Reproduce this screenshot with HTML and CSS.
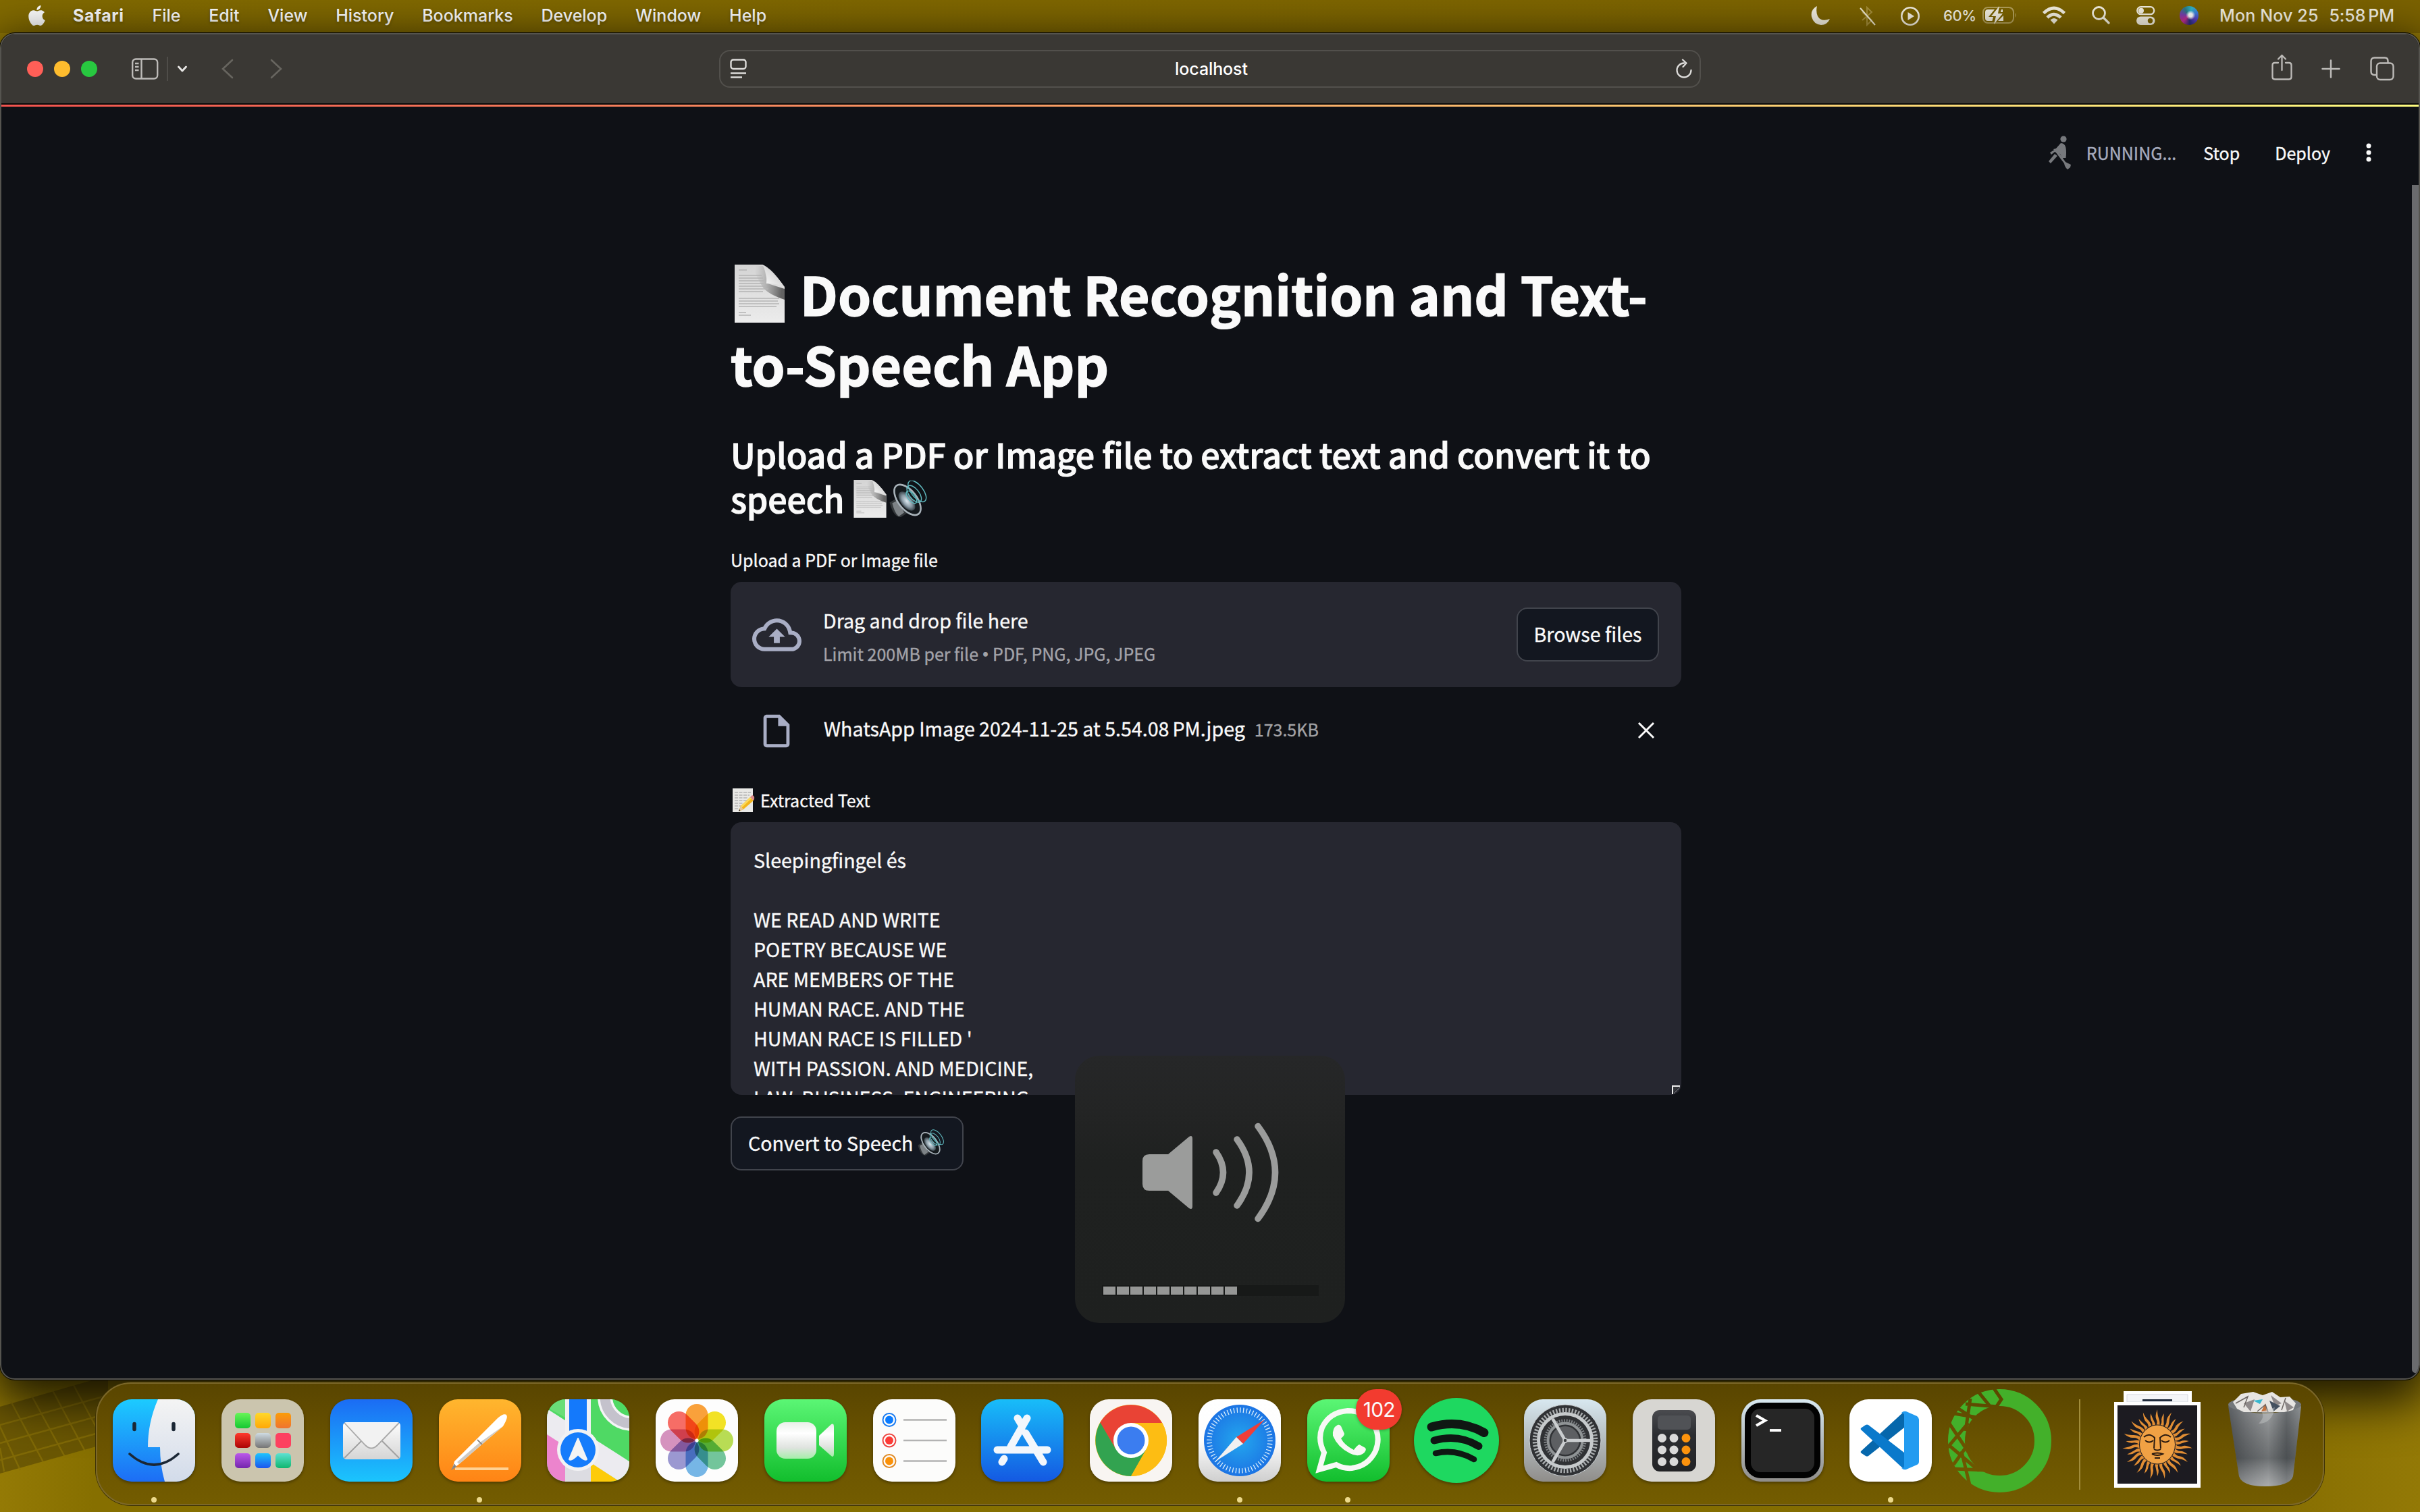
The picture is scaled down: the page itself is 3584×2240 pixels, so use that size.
FILE: index.html
```html
<!DOCTYPE html>
<html lang="en">
<head>
<meta charset="utf-8">
<title>localhost</title>
<link rel="stylesheet" href="styles.css">
</head>
<body>
<svg class="defs" width="0" height="0">
  <defs>
    <linearGradient id="paper" x1="0" y1="0" x2="0" y2="1"><stop offset="0" stop-color="#d4d4d4"/><stop offset="1" stop-color="#ececec"/></linearGradient>
    <linearGradient id="curlshade" x1="0" y1="0" x2="1" y2=".15"><stop offset=".1" stop-color="#888" stop-opacity="0"/><stop offset="1" stop-color="#555" stop-opacity=".9"/></linearGradient>
    <linearGradient id="curl" x1="0" y1="1" x2="1" y2="0"><stop offset="0" stop-color="#fff"/><stop offset="1" stop-color="#bbb"/></linearGradient>
    <radialGradient id="cone"><stop offset="0" stop-color="#dbe8f0"/><stop offset=".6" stop-color="#8b9ba6"/><stop offset="1" stop-color="#39434a"/></radialGradient>
    <symbol id="e-doc" viewBox="0 0 74 86">
      <path d="M0 0H41Q56 8 74 33V86H0Z" fill="url(#paper)"/>
      <path d="M26 2H43L49 28L74 36V52Q50 44 42 34Q34 22 26 2Z" fill="url(#curlshade)"/>
      <path d="M41 0Q56 6 74 34Q64 27 47 28Q49 12 41 0Z" fill="url(#curl)"/>
      <path d="M6 8H18M6 16H40M6 20H42M6 24H44M6 28H43M6 32H45M6 36H50M6 40H42M6 50H66M6 54H64M6 58H66M6 62H62M6 71H17M6 75H24" stroke="#b4b4b4" stroke-width="1.3"/>
    </symbol>
    <symbol id="e-spk" viewBox="0 0 58 56">
      <path d="M2 33L14 26L30 48L19 55Q8 56 2 33Z" fill="#33373a"/>
      <path d="M6 34L14 30L24 48L16 54Q10 50 6 34Z" fill="#7d8286"/>
      <ellipse cx="29" cy="29" rx="14" ry="27" transform="rotate(-38 29 29)" fill="#14191d" stroke="#a9b3ba" stroke-width="2.600"/>
      <ellipse cx="28" cy="31" rx="9" ry="17" transform="rotate(-38 28 31)" fill="url(#cone)"/>
      <g fill="none" stroke="#5fb7bd" stroke-width="1.500"><ellipse cx="35" cy="25" rx="5.500" ry="11" transform="rotate(-38 35 25)"/><ellipse cx="39" cy="20" rx="7.500" ry="15" transform="rotate(-38 39 20)"/><ellipse cx="43.500" cy="16" rx="9" ry="19" transform="rotate(-38 43.500 16)"/></g>
    </symbol>
    <symbol id="e-memo" viewBox="0 0 34 36">
      <path d="M1 0H31V35H1Z" fill="#e9e9e6"/>
      <path d="M4 6H28M4 10H26M4 14H24M4 18H22M4 22H16M4 26H14M4 30H11" stroke="#9b9b9b" stroke-width="1.2" stroke-dasharray="5 1.5"/>
      <path d="M10 34L13 26L27 13L32 18L17 31Z" fill="#f3b51c"/><path d="M13 26L27 13L29 15L14 29Z" fill="#fbd95b"/>
      <path d="M27 13L30 10Q34 11 33 16L32 18Z" fill="#d98a8a"/><path d="M10 34L13 26L17 31Z" fill="#e6c79a"/><path d="M10 34L11 31L12.500 32.500Z" fill="#222"/>
    </symbol>
    <linearGradient id="g-find" x1="0" y1="0" x2="0" y2="1"><stop offset="0" stop-color="#1ccbff"/><stop offset="1" stop-color="#1d6df5"/></linearGradient>
    <linearGradient id="g-find2" x1="0" y1="0" x2="0" y2="1"><stop offset="0" stop-color="#f4f4f4"/><stop offset="1" stop-color="#d2dbea"/></linearGradient>
    <linearGradient id="g-mail" x1="0" y1="0" x2="0" y2="1"><stop offset="0" stop-color="#1b6cf4"/><stop offset="1" stop-color="#1bc5fd"/></linearGradient>
    <linearGradient id="g-env" x1="0" y1="0" x2="0" y2="1"><stop offset="0" stop-color="#fdfdfd"/><stop offset="1" stop-color="#d5d5d5"/></linearGradient>
    <linearGradient id="g-pages" x1="0" y1="0" x2="0" y2="1"><stop offset="0" stop-color="#ffb62e"/><stop offset="1" stop-color="#ff8415"/></linearGradient>
    <linearGradient id="g-green" x1="0" y1="0" x2="0" y2="1"><stop offset="0" stop-color="#5bf675"/><stop offset="1" stop-color="#12be2d"/></linearGradient>
    <linearGradient id="g-cam" x1="0" y1="0" x2="0" y2="1"><stop offset="0" stop-color="#e8f0e8"/><stop offset=".3" stop-color="#fff"/><stop offset=".7" stop-color="#dfe3df"/><stop offset="1" stop-color="#a5eeaa"/></linearGradient>
    <linearGradient id="g-app" x1="0" y1="0" x2="0" y2="1"><stop offset="0" stop-color="#18bdf9"/><stop offset="1" stop-color="#1459e2"/></linearGradient>
    <linearGradient id="g-saf" x1="0" y1="0" x2="0" y2="1"><stop offset="0" stop-color="#fff"/><stop offset=".5" stop-color="#fdfdfd"/><stop offset="1" stop-color="#cfcfcf"/></linearGradient>
    <radialGradient id="g-saf2"><stop offset="0" stop-color="#23a7ee"/><stop offset="1" stop-color="#1c74e4"/></radialGradient>
    <linearGradient id="g-set" x1="0" y1="0" x2="0" y2="1"><stop offset="0" stop-color="#d8e8f0"/><stop offset="1" stop-color="#8f8d8a"/></linearGradient>
    <linearGradient id="g-calc" x1="0" y1="0" x2="0" y2="1"><stop offset="0" stop-color="#4a4b4f"/><stop offset=".4" stop-color="#2b2d31"/><stop offset="1" stop-color="#222326"/></linearGradient>
    <linearGradient id="t-green" x1="0" y1="0" x2="0" y2="1"><stop offset="0" stop-color="#68f558"/><stop offset="1" stop-color="#14c832"/></linearGradient>
    <linearGradient id="t-yellow" x1="0" y1="0" x2="0" y2="1"><stop offset="0" stop-color="#ffd82a"/><stop offset="1" stop-color="#ffa808"/></linearGradient>
    <linearGradient id="t-orange" x1="0" y1="0" x2="0" y2="1"><stop offset="0" stop-color="#fb9d08"/><stop offset="1" stop-color="#ef7430"/></linearGradient>
    <linearGradient id="t-red" x1="0" y1="0" x2="0" y2="1"><stop offset="0" stop-color="#ff3a2c"/><stop offset="1" stop-color="#ab0504"/></linearGradient>
    <linearGradient id="t-grey" x1="0" y1="0" x2="0" y2="1"><stop offset="0" stop-color="#cfdbe2"/><stop offset="1" stop-color="#757575"/></linearGradient>
    <linearGradient id="t-purple" x1="0" y1="0" x2="0" y2="1"><stop offset="0" stop-color="#bb58ea"/><stop offset="1" stop-color="#7426ac"/></linearGradient>
    <linearGradient id="t-blue" x1="0" y1="0" x2="0" y2="1"><stop offset="0" stop-color="#1cc4ff"/><stop offset="1" stop-color="#1b55ee"/></linearGradient>
    <linearGradient id="t-teal" x1="0" y1="0" x2="0" y2="1"><stop offset="0" stop-color="#5ce2d2"/><stop offset="1" stop-color="#10b66e"/></linearGradient>
    <linearGradient id="g-bin" x1="0" y1="0" x2="1" y2="0"><stop offset="0" stop-color="#5c6064"/><stop offset=".25" stop-color="#808386"/><stop offset=".55" stop-color="#a2a5a7"/><stop offset=".8" stop-color="#6c7073"/><stop offset="1" stop-color="#8e9295"/></linearGradient>
    <linearGradient id="g-binv" x1="0" y1="0" x2="0" y2="1"><stop offset="0" stop-color="#000" stop-opacity="0"/><stop offset=".65" stop-color="#1c2022" stop-opacity=".4"/><stop offset="1" stop-color="#bbb" stop-opacity=".3"/></linearGradient>
    <clipPath id="sq"><rect width="122" height="122" rx="28"/></clipPath>
    <mask id="weave"><rect width="153" height="153" fill="#fff"/><path d="M66-4L79 15L69 30M26 22L73 26M44 3L66 30M33 14L26 62M8 36L44 42M14 28L42 46M0 48L30 93M30 50L-2 88M0 82L46 121M28 84L8 112M8 118L54 120M20 92L33 146" stroke="#000" stroke-width="5" fill="none"/></mask>
    <g id="rays"><path d="M-3-26Q1-32-1.500-37Q-4-42 0-52Q0-44 2-39Q4.500-33 3-26Z"/><path transform="rotate(12)" d="M-3-26Q0-31-1-35Q-3-40 0-47Q1-40 2-36Q4-31 3-26Z"/></g>
  </defs>
</svg>

<svg class="wallpaper" width="400" height="196" viewBox="0 2044 400 196">
  <path d="M0 2084L160 2038V2138L0 2183Z" fill="#5f4d04" opacity=".75"/>
  <path d="M0 2111L160 2067M0 2138L160 2094M0 2163L160 2119M-10 2092L30 2178M16 2076L64 2166M47 2068L96 2158M78 2060L126 2150M109 2052L156 2140M0 2145L6 2180" stroke="#8a7208" stroke-width="2.500" opacity=".7"/>
</svg>

<header class="menubar">
  <svg class="apple" width="29" height="30" viewBox="2 0 20 24" fill="#fff"><path d="M12.152 6.896c-.948 0-2.415-1.078-3.960-1.040-2.040.027-3.910 1.183-4.961 3.014-2.117 3.675-.546 9.103 1.519 12.090 1.013 1.454 2.208 3.090 3.792 3.039 1.520-.065 2.090-.987 3.935-.987 1.831 0 2.350.987 3.960.948 1.637-.026 2.676-1.480 3.676-2.948 1.156-1.688 1.636-3.325 1.662-3.415-.039-.013-3.182-1.221-3.220-4.857-.026-3.040 2.480-4.494 2.597-4.559-1.429-2.090-3.623-2.324-4.390-2.376-2-.156-3.675 1.090-4.610 1.090zM15.530 3.830c.843-1.012 1.400-2.427 1.245-3.830-1.207.052-2.662.805-3.532 1.818-.780.896-1.454 2.338-1.273 3.714 1.338.104 2.715-.688 3.559-1.701"/></svg>
  <nav class="menus"><b>Safari</b><span>File</span><span>Edit</span><span>View</span><span>History</span><span>Bookmarks</span><span>Develop</span><span>Window</span><span>Help</span></nav>
  <div class="status">
    <svg class="moon" width="28" height="28" viewBox="0 0 28 28"><path d="M9 0Q-1 5 1 16Q4 27 15 28Q24 28 28 19Q15 24 10 15Q7 8 9 0Z" fill="#f4f0e2"/></svg>
    <svg class="bt" width="24" height="30" viewBox="0 0 24 30" fill="none"><path d="M4 9L18 21L11 28V2L18 9L4 21" stroke="#a68f3a" stroke-width="2"/><path d="M1 3L23 28" stroke="#f0ead2" stroke-width="2"/></svg>
    <svg class="play" width="30" height="30" viewBox="0 0 30 30"><circle cx="15" cy="15" r="12.700" fill="none" stroke="#f4f0e2" stroke-width="2.600"/><path d="M11.500 9V21L21 15Z" fill="#f4f0e2"/></svg>
    <span class="pct">60%</span>
    <svg class="batt" width="52" height="28" viewBox="0 0 52 28"><rect x="1" y="2" width="45" height="23" rx="7" fill="none" stroke="#b3a05a" stroke-width="2"/><path d="M48.500 10Q51 13.500 48.500 17Z" fill="#b3a05a"/><path d="M4 9Q4 5 8 5H18L9 16H16L14.500 22H8Q4 22 4 18ZM28 5H30V9H27ZM31 14V22H23Z" fill="#f4f0e2"/><path d="M25 0L13 15H20L17 27L30 11H23Z" fill="#f4f0e2"/></svg>
    <svg class="wifi" width="36" height="27" viewBox="0 0 36 27" fill="none" stroke="#f4f0e2" stroke-width="4.600"><path d="M2.500 10.500Q18-4.500 33.500 10.500M8 17Q18 7.500 28 17"/><path d="M12.500 20.500Q18 15.500 23.500 20.500L18 26.500Z" fill="#f4f0e2" stroke="none"/></svg>
    <svg class="find" width="27" height="27" viewBox="0 0 27 27" fill="none" stroke="#f4f0e2" stroke-width="2.800"><circle cx="10.500" cy="10.500" r="9"/><path d="M17 17L25 25" stroke-width="3.200" stroke-linecap="round"/></svg>
    <svg class="cc" width="28" height="28" viewBox="0 0 28 28"><rect x="1.200" y="1.200" width="25" height="11" rx="5.500" fill="none" stroke="#f4f0e2" stroke-width="2.300"/><circle cx="7" cy="6.700" r="4" fill="#f4f0e2"/><rect x="0" y="15.500" width="27.500" height="12.500" rx="6.200" fill="#f4f0e2"/><circle cx="20.500" cy="21.700" r="3.700" fill="#7c6300"/></svg>
    <i class="siri"></i>
    <span class="clock">Mon Nov 25</span><span class="clock time">5:58<small></small>PM</span>
  </div>
</header>

<main class="window">
  <div class="toolbar">
    <i class="light red"></i><i class="light amber"></i><i class="light green"></i>
    <svg class="side" width="40" height="32" viewBox="0 0 40 32" fill="none" stroke="#bdbbb8" stroke-width="2.400"><rect x="1.200" y="1.500" width="37" height="29" rx="5"/><path d="M14.500 2V30M5 8H10.500M5 13H10.500M5 18H10.500"/></svg>
    <i class="rule"></i>
    <svg class="drop" width="14" height="10" viewBox="0 0 14 10" fill="none" stroke="#e8e7e5" stroke-width="2.800" stroke-linecap="round" stroke-linejoin="round"><path d="M1.500 2L7 8L12.500 2"/></svg>
    <svg class="prev" width="18" height="30" viewBox="0 0 18 30" fill="none" stroke="#67655f" stroke-width="2.600" stroke-linecap="round"><path d="M16 2L2 15L16 28"/></svg>
    <svg class="next" width="18" height="30" viewBox="0 0 18 30" fill="none" stroke="#67655f" stroke-width="2.600" stroke-linecap="round"><path d="M2 2L16 15L2 28"/></svg>
    <div class="urlbar">
      <svg width="26" height="30" viewBox="0 0 26 30" fill="none" stroke="#dddcda" stroke-width="2.400"><rect x="1.500" y="1.500" width="22" height="13.500" rx="3.500"/><path d="M1 21.500H24M1 27.500H18"/></svg>
      <span>localhost</span>
      <svg width="26" height="30" viewBox="0 0 26 30" fill="none" stroke="#dddcda" stroke-width="2.300" stroke-linecap="round" stroke-linejoin="round"><path d="M13 6.500A10.500 10.500 0 1 0 23.500 17M11 1.500L16.500 6.500L11.500 12"/></svg>
    </div>
    <svg class="share" width="32" height="40" viewBox="0 0 32 40" fill="none" stroke="#bdbbb8" stroke-width="2.300" stroke-linecap="round" stroke-linejoin="round"><path d="M10 13H5Q1.500 13 1.500 16.500V34Q1.500 37.500 5 37.500H26Q29.500 37.500 29.500 34V16.500Q29.500 13 26 13H21M15.500 24V2M10 7.500L15.500 2L21 7.500"/></svg>
    <svg class="plus" width="28" height="28" viewBox="0 0 28 28" stroke="#bdbbb8" stroke-width="2.500" stroke-linecap="round"><path d="M14 1.500V26.500M1.500 14H26.500"/></svg>
    <svg class="tabs" width="36" height="36" viewBox="0 0 36 36" fill="none" stroke="#bdbbb8" stroke-width="2.400"><rect x="10" y="9.500" width="24.500" height="24.500" rx="5"/><path d="M10 27H6.500Q1.500 27 1.500 22V6.500Q1.500 1.500 6.500 1.500H22Q26.500 1.500 26.500 6.500V9.500"/></svg>
  </div>
  <div class="page">
    <div class="appbar">
      <svg width="36" height="50" viewBox="0 0 36 50" fill="#77797d"><circle cx="23" cy="5" r="4.600"/><path d="M19 11Q25 11 26.500 18Q27.500 25 26.500 33L21 33L18 27L10 24L5 28L3 25L11 20Z"/><path d="M8 20L12 19L26 39L34 43L33 47L29 50Q25 47 24 41Z"/><path d="M1 38L10 27L14 30L4 41Z"/></svg>
      <span class="run">RUNNING...</span><span class="stop">Stop</span><span class="deploy">Deploy</span>
      <svg class="dots" width="8" height="28" viewBox="0 0 8 28" fill="#fafafa"><circle cx="4" cy="4" r="3.500"/><circle cx="4" cy="14" r="3.500"/><circle cx="4" cy="24" r="3.500"/></svg>
    </div>
    <div class="column">
      <h1><svg><use href="#e-doc"/></svg> Document Recognition and Text-<br>to-Speech App</h1>
      <h2>Upload a PDF or Image file to extract text and convert it to<br>speech <svg class="d"><use href="#e-doc"/></svg><svg class="s"><use href="#e-spk"/></svg></h2>
      <label>Upload a PDF or Image file</label>
      <section class="dropzone">
        <svg width="73" height="73" viewBox="0 0 24 24" fill="#a9aec5"><path d="M19.350 10.040C18.670 6.590 15.640 4 12 4 9.110 4 6.600 5.640 5.350 8.040 2.340 8.360 0 10.910 0 14c0 3.310 2.690 6 6 6h13c2.760 0 5-2.240 5-5 0-2.640-2.050-4.780-4.650-4.960zM19 18H6c-2.210 0-4-1.790-4-4 0-2.050 1.530-3.760 3.560-3.970l1.070-.110.500-.950C8.080 7.140 9.940 6 12 6c2.620 0 4.880 1.860 5.390 4.430l.300 1.500 1.530.110c1.560.100 2.780 1.410 2.780 2.960 0 1.650-1.350 3-3 3zM8 13h2.550v3h2.900v-3H16l-4-4z"/></svg>
        <div class="hint"><p>Drag and drop file here</p><small>Limit 200MB per file<em>•</em>PDF, PNG, JPG, JPEG</small></div>
        <button class="browse">Browse files</button>
      </section>
      <section class="file">
        <svg width="58" height="58" viewBox="0 0 24 24" fill="#a9aec5"><path d="M14 2H6c-1.100 0-1.990.900-1.990 2L4 20c0 1.100.890 2 1.990 2H18c1.100 0 2-.900 2-2V8l-6-6zM6 20V4h7v5h5v11H6z"/></svg>
        <p>WhatsApp Image 2024-11-25 at 5.54.08<i></i>PM.jpeg</p><small>173.5KB</small>
        <svg class="x" width="26" height="26" viewBox="0 0 26 26" stroke="#fafafa" stroke-width="3"><path d="M2 2L24 24M24 2L2 24"/></svg>
      </section>
      <label class="ext"><svg><use href="#e-memo"/></svg>Extracted Text</label>
      <div class="area">Sleepingfingel és

WE READ AND WRITE
POETRY BECAUSE WE
ARE MEMBERS OF THE
HUMAN RACE. AND THE
HUMAN RACE IS FILLED '
WITH PASSION. AND MEDICINE,
LAW, BUSINESS, ENGINEERING,<svg class="grip" width="13" height="13" viewBox="0 0 13 13" fill="none"><path d="M0 0H13L0 13Z" fill="#333539"/><path d="M1 13V1H12" stroke="#eee" stroke-width="2"/><path d="M3 12L12 3M7 12L12 7" stroke="#8d8d90"/></svg></div>
      <button class="convert">Convert to Speech<svg><use href="#e-spk"/></svg></button>
    </div>
    <i class="scroll"></i>
  </div>
</main>

<aside class="osd">
  <svg width="202" height="150" viewBox="0 0 202 150"><path d="M10 48H38L69 22Q74 19 74 25V125Q74 131 69 128L38 102H10Q0 102 0 92V58Q0 48 10 48Z" fill="#9b9c9b"/><g fill="none" stroke="#9b9c9b" stroke-width="9.500" stroke-linecap="round"><path d="M109 45Q130 75 109 105M140 26Q176 75 140 124M171 6.500Q222 75 171 143.500"/></g></svg>
  <div class="meter"><i></i><i></i><i></i><i></i><i></i><i></i><i></i><i></i><i></i><i></i></div>
</aside>

<footer class="dock">
  <div class="app on"><svg viewBox="0 0 122 122"><g clip-path="url(#sq)"><path d="M0 0H122V122H0Z" fill="url(#g-find)"/><path d="M67 0Q52 34 52 71H70Q70 98 77 122H122V0Z" fill="url(#g-find2)"/></g><g fill="none" stroke="#1b2735" stroke-linecap="round"><path d="M32 36.500V44.500M90 36.500V44.500" stroke-width="5.500"/><path d="M25 81Q61 113 97 81" stroke-width="3.600"/></g></svg></div>
  <div class="app"><svg viewBox="0 0 122 122"><rect width="122" height="122" rx="28" fill="#cbc5ae"/><rect x="20" y="20" width="23" height="23" rx="5" fill="url(#t-green)"/><rect x="50" y="20" width="23" height="23" rx="5" fill="url(#t-yellow)"/><rect x="80" y="20" width="23" height="23" rx="5" fill="url(#t-orange)"/><rect x="20" y="50" width="23" height="22" rx="5" fill="url(#t-red)"/><rect x="50" y="50" width="23" height="22" rx="5" fill="url(#t-grey)"/><rect x="80" y="50" width="23" height="22" rx="5" fill="#fd4160"/><rect x="20" y="80" width="23" height="22" rx="5" fill="url(#t-purple)"/><rect x="50" y="80" width="23" height="22" rx="5" fill="url(#t-blue)"/><rect x="80" y="80" width="23" height="22" rx="5" fill="url(#t-teal)"/></svg></div>
  <div class="app"><svg viewBox="0 0 122 122"><rect width="122" height="122" rx="28" fill="url(#g-mail)"/><rect x="19" y="34" width="85" height="55" rx="5" fill="url(#g-env)"/><path d="M21 87L46 62M102 87L77 62" stroke="#a0a0a0" stroke-width="1.800"/><path d="M21 35L52 68Q61 77 70 68L102 35" fill="#f2f2f2" stroke="#a9a9a9" stroke-width="1.800"/></svg></div>
  <div class="app on"><svg viewBox="0 0 122 122"><rect width="122" height="122" rx="28" fill="url(#g-pages)"/><path d="M24 103H103" stroke="#ffd193" stroke-width="4"/><path d="M20 103L23 92L87 28Q96 20 100 23Q103 27 95 40L60 70L30 96Z" fill="#fff"/><path d="M30 96L60 70L95 40Q86 46 58 66L27 93Z" fill="#cfcac4"/><path d="M57 60L64 67M20 103L23 97L25 100Z" stroke="#8e8a86" stroke-width="1.800" fill="#777"/></svg></div>
  <div class="app"><svg viewBox="0 0 122 122"><g clip-path="url(#sq)"><rect width="122" height="122" fill="#4fd964"/><path d="M0 50L40 80V122H0Z" fill="#ec84cd"/><path d="M60 90L108 122H60Z" fill="#fdcb09"/><path d="M0 14L122 92V122H108L0 52Z" fill="#ecebf0"/><path d="M27 0H65V122H27Z" fill="#f1f1f4"/><path d="M27 70H65V122H27Z" fill="#dcdce2"/><path d="M65 0H122V92L65 52Z" fill="#4fd964"/><path d="M0 0H27V27L0 12Z" fill="#6ade78"/><path d="M33 0H59V60H33Z" fill="#1479fb"/><circle cx="126" cy="-4" r="40" fill="none" stroke="#f4f4f6" stroke-width="22"/><circle cx="126" cy="-4" r="40" fill="none" stroke="#c4c2cc" stroke-width="15"/></g><circle cx="46" cy="75" r="31" fill="#f2f2f4"/><circle cx="46" cy="75" r="26" fill="#167cfb"/><path d="M46 58L59 89Q56 92 46 82Q36 92 33 89Z" fill="#f4f4f4" stroke="#f4f4f4" stroke-width="2" stroke-linejoin="round"/></svg></div>
  <div class="app"><svg class="photos" viewBox="-61 -61 122 122"><rect x="-61" y="-61" width="122" height="122" rx="28" fill="#fdfdfd"/><g><rect x="-16.500" y="-54" width="33" height="52" rx="16.500" fill="#fb9a2a"/><rect x="-16.500" y="-54" width="33" height="52" rx="16.500" fill="#f3e212" transform="rotate(45)"/><rect x="-16.500" y="-54" width="33" height="52" rx="16.500" fill="#b4dc45" transform="rotate(90)"/><rect x="-16.500" y="-54" width="33" height="52" rx="16.500" fill="#68c294" transform="rotate(135)"/><rect x="-16.500" y="-54" width="33" height="52" rx="16.500" fill="#6bb2e6" transform="rotate(180)"/><rect x="-16.500" y="-54" width="33" height="52" rx="16.500" fill="#9490cf" transform="rotate(225)"/><rect x="-16.500" y="-54" width="33" height="52" rx="16.500" fill="#d48abb" transform="rotate(270)"/><rect x="-16.500" y="-54" width="33" height="52" rx="16.500" fill="#f8625a" transform="rotate(315)"/></g><circle r="2.500" fill="#fff"/></svg></div>
  <div class="app"><svg viewBox="0 0 122 122"><rect width="122" height="122" rx="28" fill="url(#g-green)"/><rect x="18" y="34" width="59" height="54" rx="13" fill="url(#g-cam)"/><path d="M81 54L98 38Q103 34 103 41V80Q103 88 98 83L81 68Z" fill="url(#g-cam)"/></svg></div>
  <div class="app"><svg viewBox="0 0 122 122"><rect width="122" height="122" rx="28" fill="#fcfcfb"/><g stroke="#b3b3b3" stroke-width="2.400"><path d="M45 30.500H109M45 61H109M45 91.500H109"/></g><g stroke-width="2"><circle cx="24" cy="30.500" r="9.500" fill="none" stroke="#1a7cf2"/><circle cx="24" cy="30.500" r="6" fill="#0a7bff"/><circle cx="24" cy="61" r="9.500" fill="none" stroke="#ee4540"/><circle cx="24" cy="61" r="6" fill="#fd3b36"/><circle cx="24" cy="91.500" r="9.500" fill="none" stroke="#e08a24"/><circle cx="24" cy="91.500" r="6" fill="#fb9108"/></g></svg></div>
  <div class="app"><svg viewBox="0 0 122 122"><rect width="122" height="122" rx="28" fill="url(#g-app)"/><g stroke="#f3f7fc" stroke-width="11" stroke-linecap="round"><path d="M54 28L60 38M66 50L92 93M68 28L44 70M34 88L31 93M24 75H98"/></g></svg></div>
  <div class="app"><svg viewBox="0 0 122 122"><rect width="122" height="122" rx="28" fill="#f8f5f2"/><circle cx="61" cy="61" r="53" fill="#fdbd13"/><path d="M61 61V35H107A53 53 0 0 0 15 35L38.500 74Z" fill="#e94335"/><path d="M15.500 34.500A53 53 0 0 0 61 114L84 74L61 61L38.500 74Z" fill="#32a350"/><path d="M61 35H107.300A53 53 0 0 1 61 114L83.500 74Z" fill="#fdbd13"/><circle cx="61" cy="61" r="26" fill="#fff"/><circle cx="61" cy="61" r="20.500" fill="#3b7df0"/></svg></div>
  <div class="app on"><svg viewBox="0 0 122 122"><rect width="122" height="122" rx="28" fill="url(#g-saf)"/><circle cx="61" cy="61" r="53" fill="url(#g-saf2)"/><circle cx="61" cy="61" r="45" fill="none" stroke="#dceffc" stroke-width="7.500" stroke-dasharray="1.300 3.412"/><path d="M98 30L66 66L56 56Z" fill="#ef3e38"/><path d="M25 92L56 56L66 66Z" fill="#f1f1f1"/></svg></div>
  <div class="app on"><svg viewBox="0 0 122 122"><rect width="122" height="122" rx="28" fill="url(#g-green)"/><path d="M18 104L25 79Q15 60 22 42Q33 19 60 17Q84 17 97 35Q110 55 101 77Q90 99 66 102Q54 103 43 97Z" fill="none" stroke="#f7f8f5" stroke-width="8"/><path d="M45 38Q49 37 51 42L55 51Q55 54 50 58Q55 68 69 75Q74 68 77 67L86 72Q89 76 82 81Q74 86 63 80Q45 71 38 54Q37 42 45 38Z" fill="#f7f8f5"/></svg><span class="badge">102</span></div>
  <div class="app"><svg class="big" viewBox="0 0 126 126"><circle cx="63" cy="63" r="63" fill="#1ed860"/><g fill="none" stroke="#0f1713" stroke-linecap="round"><path d="M26 43Q68 31 104 51.500" stroke-width="13"/><path d="M30 63Q66 53 96 71.500" stroke-width="11"/><path d="M32 82Q62 75 89 91" stroke-width="8.500"/></g></svg></div>
  <div class="app"><svg viewBox="0 0 122 122"><rect width="122" height="122" rx="28" fill="url(#g-set)"/><circle cx="61" cy="61" r="53" fill="#303235" stroke="#d0d5d8" stroke-width="1"/><g fill="none" stroke="#c6cacc"><circle cx="61" cy="61" r="45" stroke-width="6.500" stroke-dasharray="2.300 2.412" stroke="#a9adaf"/><circle cx="61" cy="61" r="39.500" stroke-width="5"/><circle cx="61" cy="61" r="29.500" stroke-width="4" stroke-dasharray="1.800 1.900" stroke="#808487"/><circle cx="61" cy="61" r="25.500" stroke-width="4" stroke="#8f9395"/></g><circle cx="61" cy="61" r="21" fill="#5d5f62"/><g stroke="#cacdcf" stroke-width="4.500"><path d="M61 61H98M61 61L42.500 29M61 61L42.500 93"/></g><circle cx="61" cy="61" r="3" fill="#3c3f41" stroke="#cacdcf" stroke-width="1.500"/></svg></div>
  <div class="app"><svg viewBox="0 0 122 122"><rect width="122" height="122" rx="28" fill="#d7d6d2"/><rect x="29" y="16" width="65" height="91" rx="11" fill="url(#g-calc)"/><rect x="37" y="24" width="49" height="21" rx="5" fill="#505256"/><g fill="#d9d9d9"><circle cx="43.500" cy="57.500" r="6.500"/><circle cx="61" cy="57.500" r="6.500"/><circle cx="43.500" cy="75" r="6.500"/><circle cx="61" cy="75" r="6.500"/><circle cx="43.500" cy="92.500" r="6.500"/><circle cx="61" cy="92.500" r="6.500"/></g><g fill="#fc930d"><circle cx="79" cy="57.500" r="6.500"/><circle cx="79" cy="75" r="6.500"/><circle cx="79" cy="92.500" r="6.500"/></g></svg></div>
  <div class="app"><svg viewBox="0 0 122 122"><rect width="122" height="122" rx="28" fill="url(#g-set)"/><rect x="5" y="5" width="112" height="112" rx="24" fill="#020202"/><rect x="14" y="14" width="94" height="94" rx="14" fill="#262626"/><path d="M22 24L35 31.500L22 39" fill="none" stroke="#fff" stroke-width="4.200"/><path d="M42 46H59" stroke="#fff" stroke-width="3.800"/></svg></div>
  <div class="app on"><svg viewBox="0 0 122 122"><rect width="122" height="122" rx="28" fill="#fff"/><path d="M81 18L17 77Q16 79 18 80L24 84Q26 85 28 84L81 42Z" fill="#0667ac"/><path d="M81 104L17 45Q16 43 18 42L24 38Q26 37 28 38L81 79Z" fill="#0a79cb"/><path d="M77 20Q80 17 84 18L100 25Q103 27 103 30V92Q103 96 100 97L84 104Q80 105 77 102Q81 103 81 98V24Q81 20 77 20Z" fill="#229bf0"/></svg></div>
  <div class="app"><svg class="ring" viewBox="0 0 153 153"><circle cx="76.500" cy="76.500" r="64" fill="none" stroke="#43b02a" stroke-width="25" mask="url(#weave)"/></svg></div>
  <i class="sep"></i>
  <svg class="stack" width="128" height="143" viewBox="0 0 128 143"><path d="M14 0H115V30H14Z" fill="#fff"/><path d="M19 5H109V16H19Z" fill="#f4f5f8" stroke="#d5d8e0"/><path d="M42 12H86V15H42Z" fill="#1f2a3c"/><rect y="16" width="128" height="127" fill="#fff"/><rect x="5" y="21" width="118" height="116" fill="#1c1b21"/><g transform="translate(64 79)" fill="#e08d34"><use href="#rays"/><use href="#rays" transform="rotate(24)"/><use href="#rays" transform="rotate(48)"/><use href="#rays" transform="rotate(72)"/><use href="#rays" transform="rotate(96)"/><use href="#rays" transform="rotate(120)"/><use href="#rays" transform="rotate(144)"/><use href="#rays" transform="rotate(168)"/><use href="#rays" transform="rotate(192)"/><use href="#rays" transform="rotate(216)"/><use href="#rays" transform="rotate(240)"/><use href="#rays" transform="rotate(264)"/><use href="#rays" transform="rotate(288)"/><use href="#rays" transform="rotate(312)"/><use href="#rays" transform="rotate(336)"/><ellipse rx="27" ry="29.500" fill="#1c1b21"/><ellipse rx="26" ry="28.500" fill="#f0a144"/><path d="M-20-11Q-12-18-4-10L-5 6M20-11Q12-18 4-10L5 6M-18-6Q-12-1-6-6M18-6Q12-1 6-6M-5 7Q0 10 5 7M-8 14Q0 11 8 14Q0 18-8 14M-4 20H4" fill="none" stroke="#2a1a10" stroke-width="2"/></g></svg>
  <svg class="bin" width="110" height="142" viewBox="0 0 110 142"><path d="M1 22Q55 44 109 22L97 126Q92 141 55 141Q22 141 17 126Z" fill="url(#g-bin)"/><path d="M1 22Q55 44 109 22L97 126Q92 141 55 141Q22 141 17 126Z" fill="url(#g-binv)"/><ellipse cx="55" cy="20" rx="54" ry="12" fill="#74787b"/><path d="M8 16L20 4L38 1L52 6L66 1L78 9L92 8L101 18L97 28L84 31H24L14 26Z" fill="#e7e5e2"/><path d="M24 18L40 12L34 30ZM64 6L80 18L70 22ZM84 14L98 24L88 30Z" fill="#8f8a8a"/><path d="M38 14L52 12L48 19Z" fill="#37b7cf"/><path d="M62 14L78 22L68 30Z" fill="#43505f"/><path d="M50 30L56 18L58 30Z" fill="#c5713c"/><path d="M12 18L30 8L24 24M44 30L56 20L60 31M86 10L80 28" stroke="#6b6562" stroke-width="1.500" fill="none"/><path d="M70 24Q66 48 46 48Q56 38 50 30Z" fill="#c7c9ca" opacity=".45"/></svg>
</footer>
</body>
</html>
```
FILE: styles.css
```css
* { box-sizing: border-box; margin: 0; padding: 0; }
body {
  position: relative;
  width: 3584px;
  height: 2240px;
  overflow: hidden;
  display: flex;
  flex-direction: column;
  background: linear-gradient(90deg, #947a05 0, #866f00 140px, #857000 1800px, #826a00 3300px, #937906 3584px);
  font-family: "Noto Sans CJK SC", "Noto Sans", sans-serif;
  color: #fafafa;
}
svg { display: block; flex: none; }
.defs { position: absolute; }
.wallpaper { position: absolute; left: 0; top: 2044px; }

.menubar {
  flex: none;
  height: 49px;
  display: flex;
  align-items: flex-start;
  padding: 0 38px 0 40px;
  background: linear-gradient(90deg, #826a00, #7b6200);
  font: 500 25px/46px Inter, sans-serif;
  color: #fff;
  position: relative;
}
.apple { margin-top: 8px; }
.menus { display: flex; gap: 41.800px; margin-left: 39px; text-shadow: 0 2px 4px rgba(0, 0, 0, .25); }
.menus b { font-weight: 700; letter-spacing: .6px; }
.status { margin-left: auto; display: flex; align-items: flex-start; color: #f6f2e4; }
.status svg, .siri { margin-top: 9px; }
.bt { margin-left: 44px; }
.play { margin-left: 36px; }
.pct { font-size: 22px; margin-left: 34px; width: 50px; white-space: nowrap; letter-spacing: -.4px; }
.batt { margin-left: 8px; }
.wifi { margin-left: 36px; }
.find { margin-left: 38px; }
.cc { margin-left: 39px; }
.siri {
  width: 28px; height: 28px; margin-left: 36px; border-radius: 50%;
  background: radial-gradient(circle at 58% 48%, #fff 0 12%, rgba(255,255,255,0) 32%), conic-gradient(from 20deg, #2fb6c9, #3f7fe0, #5a3cc0, #2a2f7c, #c42f8f, #7b3fb0, #2a7c86, #2fb6c9);
}
.clock { margin-left: 31px; letter-spacing: .15px; white-space: nowrap; }
.time { margin-left: 16px; letter-spacing: -.1px; }
.time small { display: inline-block; width: 4px; }

.window {
  position: relative;
  flex: none;
  height: 1995px;
  border-radius: 22px;
  overflow: clip;
  background: #0f1116;
  border: 2px solid #55544f;
  outline: 1px solid #050505;
  display: flex;
  flex-direction: column;
  box-shadow: 0 22px 70px 10px rgba(0, 0, 0, .8);
}
.toolbar {
  flex: none;
  height: 104px;
  background: #3a3834;
  display: flex;
  align-items: center;
  padding-left: 38px;
  border-bottom: 2px solid #0a0a0a;
}
.light { width: 24px; height: 24px; border-radius: 50%; margin-right: 16px; }
.red { background: #ff5f57; }
.amber { background: #febc2e; }
.green { background: #28c840; }
.side { margin-left: 35px; }
.rule { width: 2px; height: 36px; background: #4f4d49; margin-left: 12px; }
.drop { margin-left: 14px; }
.prev { margin-left: 51px; }
.next { margin-left: 54px; }
.urlbar {
  margin-left: 647px;
  width: 1454px;
  height: 56px;
  border: 2px solid #52504c;
  border-radius: 16px;
  display: flex;
  align-items: center;
  justify-content: space-between;
  padding: 0 10px 0 14px;
  font: 500 25px/54px Inter, sans-serif;
  letter-spacing: -.1px;
  color: #fff;
}
.share { margin-left: 845px; margin-top: -4px; }
.plus { margin-left: 42px; }
.tabs { margin-left: 44px; }

.page {
  flex: 1;
  position: relative;
  border-top: 3px solid;
  border-image: linear-gradient(90deg, #f3544f, #fffd80) 1;
  -webkit-text-stroke: .35px;
}
.appbar {
  height: 140px;
  display: flex;
  align-items: center;
  justify-content: flex-end;
  padding: 0 70px 5px 0;
  font-size: 25px;
  line-height: 36px;
}
.run { margin-left: 21px; color: #a6abbd; }
.stop { margin-left: 40px; }
.deploy { margin-left: 52px; }
.dots { margin-left: 53px; }
.column {
  width: 1408px;
  margin: 84px 0 0 1080px;
  display: flex;
  flex-direction: column;
  align-items: stretch;
}
h1 { font-size: 78.600px; line-height: 104px; font-weight: 700; white-space: nowrap; -webkit-text-stroke: 1.400px #fafafa; }
h1 svg { display: inline-block; width: 74px; height: 86px; vertical-align: -10px; margin: 0 5px 0 6px; }
h2 { margin-top: 49px; font-size: 50.100px; line-height: 66px; font-weight: 500; -webkit-text-stroke: 1.100px #fafafa; letter-spacing: -.170px; white-space: nowrap; }
h2 svg { display: inline-block; }
h2 .d { width: 49px; height: 56px; vertical-align: -7px; margin-left: 3px; }
h2 .s { width: 58px; height: 55px; vertical-align: -7px; margin-left: 2px; }
label { margin-top: 40px; font-size: 25px; line-height: 36px; height: 36px; }
.dropzone {
  margin-top: 15px;
  height: 156px;
  border-radius: 16px;
  background: #262730;
  display: flex;
  align-items: center;
  padding: 0 33px 0 32px;
}
.hint { margin-left: 32px; flex: 1; display: flex; flex-direction: column; gap: 7px; }
.hint p { font-size: 28.600px; line-height: 48px; }
.hint small { font-size: 25px; line-height: 36px; color: #a3a3a9; white-space: nowrap; }
.hint em { font-style: normal; display: inline-block; width: 21px; text-indent: -2px; -webkit-text-stroke-width: 1.500px; }
button {
  font: 400 28.600px/72px "Noto Sans CJK SC", sans-serif;
  color: #fafafa;
  background: #131720;
  border: 2px solid #41444c;
  border-radius: 16px;
  height: 80px;
  white-space: nowrap;
  -webkit-text-stroke: .35px;
}
.browse { width: 211px; padding-bottom: 3px; }
.file { height: 128px; display: flex; align-items: center; padding: 1px 39px 0 39px; }
.file p { margin-left: 41px; font-size: 28.600px; line-height: 48px; white-space: nowrap; margin-bottom: 7px; }
.file p i { display: inline-block; width: 5px; }
.file small { margin-left: 14px; font-size: 25px; color: #a3a3a6; line-height: 40px; margin-bottom: 6px; }
.x { margin-left: auto; margin-bottom: 1px; }
.ext { margin-top: 21px; display: flex; }
.ext svg { width: 34px; height: 36px; margin: 1px 8px 0 2px; }
.area {
  position: relative;
  margin-top: 15px;
  height: 404px;
  border-radius: 16px;
  background: #262730;
  padding: 34px 34px;
  font-size: 28.600px;
  line-height: 44px;
  white-space: pre;
  overflow: hidden;
}
.grip { position: absolute; right: 1px; bottom: 1px; }
.convert { margin-top: 32px; width: 345px; display: flex; align-items: center; padding: 0 0 3px 24px; }
.convert svg { width: 40px; height: 40px; margin-left: 6px; }
.scroll { position: absolute; right: -1px; top: 116px; width: 11px; height: 1760px; background: #6a6b6e; border-radius: 0 0 6px 6px; }

.osd {
  position: absolute;
  left: 1592px;
  top: 1564px;
  width: 400px;
  height: 396px;
  border-radius: 36px;
  background: linear-gradient(#262728, #232424 22%, #1f2120 40%, #1e201f);
  display: flex;
  flex-direction: column;
  padding: 98px 0 0 100px;
}
.meter {
  width: 321px;
  height: 16px;
  margin: 92px 0 0 -60px;
  background: #171918;
  display: flex;
  gap: 2px;
  padding: 2px;
}
.meter i { width: 18px; height: 12px; background: #959695; }

.dock {
  position: relative;
  margin: 4px 0 0 142px;
  flex: none;
  width: 3300px;
  height: 182px;
  border-radius: 52px;
  border: 2px solid #7c6829;
  background: linear-gradient(#594500, #6a5300 50%, #735c00);
  box-shadow: 0 0 0 1px #3d3205;
  display: flex;
  align-items: flex-start;
  padding: 23px 0 0 4px;
}
.app { position: relative; flex: none; width: 160.750px; height: 122px; display: flex; justify-content: center; align-items: center; }
.app svg { width: 122px; height: 122px; filter: drop-shadow(0 2px 2px rgba(0, 0, 0, .35)); }
.app .big { width: 126px; height: 126px; }
.app .ring { width: 153px; height: 153px; filter: none; }
.photos g rect { mix-blend-mode: multiply; opacity: .92; }
.on::after { content: ""; position: absolute; left: 76px; top: 145px; width: 8px; height: 8px; border-radius: 50%; background: #ecd98b; }
.badge {
  position: absolute;
  left: 92px;
  top: -15px;
  width: 68px;
  height: 60px;
  border-radius: 30px;
  background: #f23b2f;
  font: 400 30px/61px Inter, sans-serif;
  letter-spacing: -.8px;
  text-align: center;
  box-shadow: 0 1px 4px rgba(0, 0, 0, .3);
}
.sep { width: 2px; height: 134px; background: #a18c3a; margin-left: 37px; }
.stack { margin: -12px 0 0 50px; }
.bin { margin: -12px 0 0 40px; }
```
